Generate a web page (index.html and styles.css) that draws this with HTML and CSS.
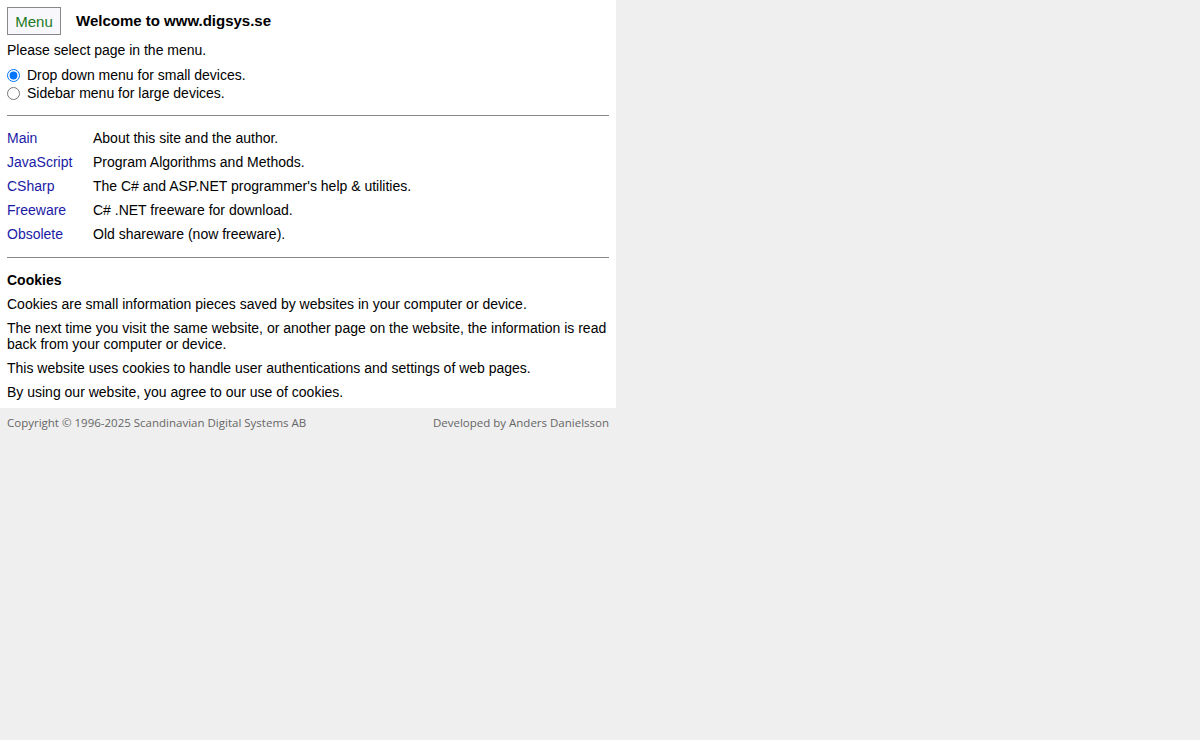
FILE: index.html
```html
<!DOCTYPE html>
<html lang="en">
<head>
    <meta charset="UTF-8">
    <title>Digsys</title>
    <link rel="stylesheet" href="styles.css">
</head>
<body>
    <div class="page">
        <div class="content">
            <div class="top-row">
                <button class="menu-btn">Menu</button>
                <h1>Welcome to www.digsys.se</h1>
            </div>
            <p class="intro">Please select page in the menu.</p>
            <div class="options">
                <label class="option"><input type="radio" name="menutype" checked> Drop down menu for small devices.</label>
                <label class="option"><input type="radio" name="menutype"> Sidebar menu for large devices.</label>
            </div>
            <hr>
            <table class="pages">
                <tr><td><a href="#">Main</a></td><td>About this site and the author.</td></tr>
                <tr><td><a href="#">JavaScript</a></td><td>Program Algorithms and Methods.</td></tr>
                <tr><td><a href="#">CSharp</a></td><td>The C# and ASP.NET programmer's help &amp; utilities.</td></tr>
                <tr><td><a href="#">Freeware</a></td><td>C# .NET freeware for download.</td></tr>
                <tr><td><a href="#">Obsolete</a></td><td>Old shareware (now freeware).</td></tr>
            </table>
            <hr>
            <h2>Cookies</h2>
            <p>Cookies are small information pieces saved by websites in your computer or device.</p>
            <p>The next time you visit the same website, or another page on the website, the information is read back from your computer or device.</p>
            <p>This website uses cookies to handle user authentications and settings of web pages.</p>
            <p>By using our website, you agree to our use of cookies.</p>
        </div>
        <div class="footer">
            <span>Copyright © 1996-2025 Scandinavian Digital Systems AB</span>
            <span>Developed by Anders Danielsson</span>
        </div>
    </div>
</body>
</html>
```

FILE: styles.css
```css
body {
    margin: 0;
    background-color: #efefef;
    font-family: Arial, "Liberation Sans", sans-serif;
    font-size: 14px;
    line-height: 16px;
    color: #000;
}
.page {
    width: 616px;
}
.content {
    background: #fff;
    padding: 7px 7px 8px 7px;
}
.top-row {
    display: flex;
    align-items: center;
    gap: 15px;
}
.menu-btn {
    height: 28px;
    width: 54px;
    padding: 0;
    background: #f8f8fc;
    border: 1px solid #888;
    color: #1e7a1e;
    font-family: Arial, "Liberation Sans", sans-serif;
    font-size: 15px;
}
h1 {
    margin: 0;
    font-size: 15px;
    font-weight: bold;
}
p {
    margin: 8px 0 0 0;
}
.intro {
    margin-top: 7px;
}
.options {
    margin: 8px 0 13px 0;
}
.option {
    display: flex;
    align-items: center;
    height: 18px;
}
.option input {
    margin: 0 7px 0 0;
    width: 13px;
    height: 13px;
}
hr {
    border: none;
    border-top: 1px solid #888;
    margin: 0;
}
table.pages {
    border-collapse: collapse;
    margin: 10px 0 11px 0;
}
.pages td {
    padding: 0;
    height: 24px;
    vertical-align: middle;
}
.pages td:first-child {
    width: 86px;
}
a {
    color: #1a1aa6;
    text-decoration: none;
}
h2 {
    margin: 14px 0 0 0;
    font-size: 14px;
    font-weight: bold;
}
.footer {
    display: flex;
    justify-content: space-between;
    padding: 7px;
    font-family: "Open Sans", sans-serif;
    font-size: 11.5px;
    line-height: 16px;
    color: #666;
}
```
